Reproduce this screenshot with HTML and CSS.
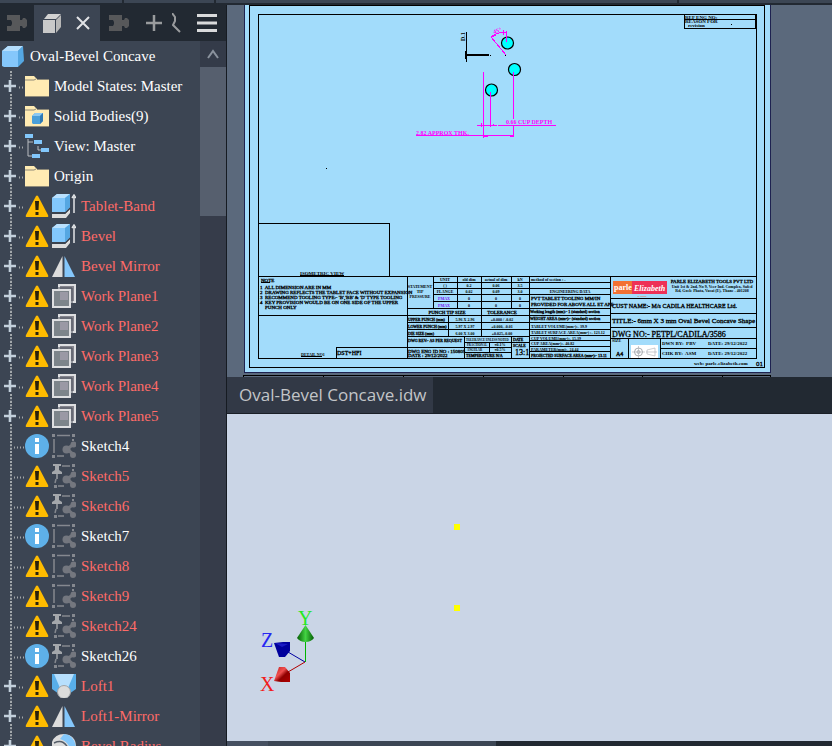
FILE: index.html
```html
<!DOCTYPE html>
<html lang="en">
<head>
<meta charset="utf-8">
<title>Oval-Bevel Concave</title>
<link rel="stylesheet" href="styles.css">
</head>
<body>
<svg class="defs" aria-hidden="true">
  <symbol id="branch" viewBox="0 0 25 30">
    <path d="M11 0V8M11 23V30" stroke="#a3a8ab" stroke-width="2" stroke-dasharray="2 1.33"/>
    <path d="M4 15H16M10 9V21" stroke="#c3d0dc" stroke-width="2.6"/>
    <path d="M19 16.5H24" stroke="#a3a8ab" stroke-width="2" stroke-dasharray="1 2"/>
  </symbol>
  <symbol id="leaf" viewBox="0 0 25 30">
    <path d="M11 0V30" stroke="#a3a8ab" stroke-width="2" stroke-dasharray="2 1.33"/>
    <path d="M14 16.5H24" stroke="#a3a8ab" stroke-width="2" stroke-dasharray="1 2"/>
  </symbol>
  <symbol id="cube" viewBox="0 0 24 24">
    <path d="M1 7 7 2H22L17 7V23H3L1 22Z" fill="#85c7fb"/>
    <path d="M1 7 7 2H22L17 7Z" fill="#b5defd"/>
    <path d="M17 7 22 2 23 17 17 23Z" fill="#55a7e2"/>
  </symbol>
  <symbol id="folder" viewBox="0 0 24 24">
    <path d="M0 2H9L12 5V6H24V22H0Z" fill="#ffebb3"/>
    <path d="M0 6H9L11 5" stroke="#8f8a78" fill="none"/>
    <path d="M12 5.5H24M0 22.5H24" stroke="#8f8a78"/>
  </symbol>
  <symbol id="bodies" viewBox="0 0 24 24">
    <use href="#folder"/>
    <path d="M7 12 10 9H18V17L15 20H8L7 19Z" fill="#4a9fd9"/>
    <path d="M7 12 10 9H18L15 12Z" fill="#8bc8f2"/>
    <path d="M15 12 18 9V17L15 20Z" fill="#2f79b5"/>
  </symbol>
  <symbol id="view" viewBox="0 0 24 24">
    <path d="M3 5V22H7M3 8H8M13 12V16H17" stroke="#b9bdc2" fill="none"/>
    <path d="M0 0H8V4H0ZM9 6H17V10H9ZM16 14H24V18H16ZM7 20H15V24H7Z" fill="#82c7fb"/>
  </symbol>
  <symbol id="warn" viewBox="0 0 24 24">
    <path d="M11 2Q12 1 13 2L23 21Q24 23 22 23H2Q0 23 1 21Z" fill="#ffbc00"/>
    <path d="M10 7H14L13.500 16H10.500ZM10.500 18H13.500V21H10.500Z" fill="#2a220c"/>
  </symbol>
  <symbol id="info" viewBox="0 0 24 24">
    <circle cx="12" cy="12" r="12" fill="#5eb0e8"/>
    <path d="M10 4H14V8H10ZM10 10H14V20H10Z" fill="#fff"/>
  </symbol>
  <symbol id="extrude" viewBox="0 0 24 24">
    <path d="M0 20H13L18 15V19L14 24H0Z" fill="#dcdcdc"/>
    <path d="M0 19H13L18 14" stroke="#3a414d" stroke-width="1.5" fill="none"/>
    <path d="M0 4 5 0H18V13L13 18H0Z" fill="#82c7fb"/>
    <path d="M0 4 5 0H18L13 4Z" fill="#b9e0fd"/>
    <path d="M13 4 18 0V13L13 18Z" fill="#55a7e2"/>
    <path d="M22 3V19M20 4L22 1L24 4" stroke="#e2e4e6" stroke-width="1.5" fill="none"/>
  </symbol>
  <symbol id="mirror" viewBox="0 0 24 24">
    <path d="M10.500 2V23H0Z" fill="#dcdcdc"/>
    <path d="M12.500 2V23H23Z" fill="#85c7fb"/>
  </symbol>
  <symbol id="plane" viewBox="0 0 24 24">
    <path d="M7 1H23V18H7Z" fill="#85858e" stroke="#dedfe1" stroke-width="2"/>
    <path d="M5 4H20V23" stroke="#4a515c" fill="none"/>
    <path d="M1 6H18V23H1Z" fill="#7c848a" stroke="#dedfe1" stroke-width="2"/>
    <path d="M8 8H16V16H8Z" fill="#9a99a5"/>
  </symbol>
  <symbol id="nodes" viewBox="0 0 24 24">
    <path d="M15 15 22 10M15 15 22 21" stroke="#74777f" stroke-width="3"/>
    <circle cx="14.500" cy="15.500" r="4" fill="#74777f"/>
    <circle cx="21.500" cy="10.500" r="3" fill="#74777f"/>
    <circle cx="21" cy="21" r="3" fill="#74777f"/>
  </symbol>
  <symbol id="sketch" viewBox="0 0 24 24">
    <path d="M5 1.500H18M2 5V19M5 22H12" stroke="#85888f" stroke-width="1.500"/>
    <path d="M0 0H3V3H0ZM20 0H23V3H20ZM0 21H3V24H0ZM20 5H22V7H20Z" fill="#85888f"/>
    <use href="#nodes"/>
  </symbol>
  <symbol id="pinned" viewBox="0 0 24 24">
    <path d="M10 2H18M4 15 3 19M6 22H12" stroke="#85888f" stroke-width="1.500"/>
    <path d="M20 0H23V3H20ZM2 21H5V24H2ZM20 5H22V7H20Z" fill="#85888f"/>
    <path d="M1 0H9V2H7V6L10 8V10H0V8L3 6V2H1ZM4.300 10H5.700V15H4.300Z" fill="#a4a7ab"/>
    <use href="#nodes"/>
  </symbol>
  <symbol id="loft" viewBox="0 0 24 24">
    <path d="M0 0H24V15L17 20H7L0 15Z" fill="#58aee9"/>
    <path d="M2 0H22L16 14H8Z" fill="#b7dffd"/>
    <circle cx="12" cy="18" r="6.500" fill="#dcdcdc" stroke="#a0a5aa"/>
  </symbol>
  <symbol id="fillet" viewBox="0 0 24 24">
    <path d="M0 8Q3 0 12 0Q24 1 24 13V24H0Z" fill="#dcdcdc"/>
    <path d="M12 0Q23 1 24 14L18 18Q18 8 8 5Z" fill="#82c7fb"/>
    <path d="M2 9Q13 4 17 17" stroke="#555d68" stroke-width="1.500" fill="none"/>
  </symbol>
  <symbol id="puzzle" viewBox="0 0 20 16">
    <path d="M0 0H13V5H15L16 3H18L20 5V11L18 13H16L15 11H13V16H0V11H4L5 9V7L4 5H0Z" fill="#57585a"/>
  </symbol>
</svg>

<div class="app">
  <div class="topstrip"><span></span><span></span><span></span><span></span></div>
  <aside class="browser">
    <header class="tabs">
      <button class="tab" aria-label="Add-in panel"><svg width="20" height="16"><use href="#puzzle"/></svg></button>
      <div class="tab active">
        <svg width="18" height="19" viewBox="0 0 18 19"><path d="M0 6H12V19H0Z" fill="#c9c9c9"/><path d="M1 5 5 0H18L13 5Z" fill="#d2d2d2"/><path d="M13 6 18 1V13L13 19Z" fill="#b7b7b7"/></svg>
        <button aria-label="Close"><svg width="14" height="14" viewBox="0 0 14 14"><path d="M1 1 13 13M13 1 1 13" stroke="#e1e3e6" stroke-width="2"/></svg></button>
      </div>
      <button class="tab third" aria-label="Second add-in panel"><svg width="20" height="16"><use href="#puzzle"/></svg></button>
      <button aria-label="Add panel"><svg width="16" height="16" viewBox="0 0 16 16"><path d="M0 8H16M8 0V16" stroke="#999b9d" stroke-width="2.500"/></svg></button>
      <button class="search" aria-label="Search"><svg width="10" height="20" viewBox="0 0 10 20"><path d="M0 0 3 4V8L1 12 3 14 8 19" stroke="#999b9d" stroke-width="2" fill="none"/></svg></button>
      <button class="menu" aria-label="Menu"><svg width="20" height="18" viewBox="0 0 20 18"><path d="M0 1.500H20M0 9H20M0 16.500H20" stroke="#d9dadb" stroke-width="3"/></svg></button>
    </header>
    <div class="treewrap">
      <ul class="tree">
        <li class="root"><svg class="ico"><use href="#cube"/></svg><span>Oval-Bevel Concave</span></li>
        <li><svg class="gut"><use href="#branch"/></svg><svg class="ico"><use href="#folder"/></svg><span>Model States: Master</span></li>
        <li><svg class="gut"><use href="#branch"/></svg><svg class="ico"><use href="#bodies"/></svg><span>Solid Bodies(9)</span></li>
        <li><svg class="gut"><use href="#branch"/></svg><svg class="ico"><use href="#view"/></svg><span>View: Master</span></li>
        <li><svg class="gut"><use href="#branch"/></svg><svg class="ico"><use href="#folder"/></svg><span>Origin</span></li>
        <li class="bad"><svg class="gut"><use href="#branch"/></svg><svg class="ico"><use href="#warn"/></svg><svg class="ico"><use href="#extrude"/></svg><span>Tablet-Band</span></li>
        <li class="bad"><svg class="gut"><use href="#branch"/></svg><svg class="ico"><use href="#warn"/></svg><svg class="ico"><use href="#extrude"/></svg><span>Bevel</span></li>
        <li class="bad"><svg class="gut"><use href="#branch"/></svg><svg class="ico"><use href="#warn"/></svg><svg class="ico"><use href="#mirror"/></svg><span>Bevel Mirror</span></li>
        <li class="bad"><svg class="gut"><use href="#branch"/></svg><svg class="ico"><use href="#warn"/></svg><svg class="ico"><use href="#plane"/></svg><span>Work Plane1</span></li>
        <li class="bad"><svg class="gut"><use href="#branch"/></svg><svg class="ico"><use href="#warn"/></svg><svg class="ico"><use href="#plane"/></svg><span>Work Plane2</span></li>
        <li class="bad"><svg class="gut"><use href="#branch"/></svg><svg class="ico"><use href="#warn"/></svg><svg class="ico"><use href="#plane"/></svg><span>Work Plane3</span></li>
        <li class="bad"><svg class="gut"><use href="#branch"/></svg><svg class="ico"><use href="#warn"/></svg><svg class="ico"><use href="#plane"/></svg><span>Work Plane4</span></li>
        <li class="bad"><svg class="gut"><use href="#branch"/></svg><svg class="ico"><use href="#warn"/></svg><svg class="ico"><use href="#plane"/></svg><span>Work Plane5</span></li>
        <li><svg class="gut"><use href="#leaf"/></svg><svg class="ico"><use href="#info"/></svg><svg class="ico"><use href="#sketch"/></svg><span>Sketch4</span></li>
        <li class="bad"><svg class="gut"><use href="#leaf"/></svg><svg class="ico"><use href="#warn"/></svg><svg class="ico"><use href="#pinned"/></svg><span>Sketch5</span></li>
        <li class="bad"><svg class="gut"><use href="#leaf"/></svg><svg class="ico"><use href="#warn"/></svg><svg class="ico"><use href="#pinned"/></svg><span>Sketch6</span></li>
        <li><svg class="gut"><use href="#leaf"/></svg><svg class="ico"><use href="#info"/></svg><svg class="ico"><use href="#sketch"/></svg><span>Sketch7</span></li>
        <li class="bad"><svg class="gut"><use href="#leaf"/></svg><svg class="ico"><use href="#warn"/></svg><svg class="ico"><use href="#sketch"/></svg><span>Sketch8</span></li>
        <li class="bad"><svg class="gut"><use href="#leaf"/></svg><svg class="ico"><use href="#warn"/></svg><svg class="ico"><use href="#sketch"/></svg><span>Sketch9</span></li>
        <li class="bad"><svg class="gut"><use href="#leaf"/></svg><svg class="ico"><use href="#warn"/></svg><svg class="ico"><use href="#pinned"/></svg><span>Sketch24</span></li>
        <li><svg class="gut"><use href="#leaf"/></svg><svg class="ico"><use href="#info"/></svg><svg class="ico"><use href="#pinned"/></svg><span>Sketch26</span></li>
        <li class="bad"><svg class="gut"><use href="#branch"/></svg><svg class="ico"><use href="#warn"/></svg><svg class="ico"><use href="#loft"/></svg><span>Loft1</span></li>
        <li class="bad"><svg class="gut"><use href="#branch"/></svg><svg class="ico"><use href="#warn"/></svg><svg class="ico"><use href="#mirror"/></svg><span>Loft1-Mirror</span></li>
        <li class="bad"><svg class="gut"><use href="#branch"/></svg><svg class="ico"><use href="#warn"/></svg><svg class="ico"><use href="#fillet"/></svg><span>Bevel Radius</span></li>
      </ul>
      <div class="scroll">
        <button aria-label="Scroll up"><svg width="12" height="10" viewBox="0 0 12 10"><path d="M1 9 6 2 11 9" stroke="#8a929d" stroke-width="2" fill="none"/></svg></button>
        <div class="thumb"></div>
      </div>
    </div>
  </aside>

  <main class="work">
    <section class="drawing">
      <svg class="sheet" viewBox="227 5 605 372" role="img" aria-label="Tablet drawing sheet">
        <g shape-rendering="crispEdges">
          <path d="M244 5H771V373H244Z" fill="#1e2250"/>
          <path d="M245 5H770V372H245Z" fill="#a2dcfb"/>
          <g fill="none" stroke="#000">
            <path d="M249.500 5.500H764.500V367.500H249.500Z"/>
            <path d="M258.500 14.500H756.500V358.500H258.500Z"/>
            <path d="M243.500 377V375.500H770.500V377M323.500 375V377M403.500 375V377M483.500 375V377M563.500 375V377M642.500 375V377M722.500 375V377"/>
            <path d="M684.500 14V28.500H755.500V14M684 19.500H756"/>
            <path d="M258 223.500H389.500V276M258 276.500H756M407.500 276V358M258 315.500H407M336.500 358V347.500H407"/>
            <path d="M433.500 276V308M457.500 276V308M481.500 276V336M511.500 276V308M529.500 276V358M448.500 315V336M464.500 336V358M489.500 342V352M511.500 336V358"/>
            <path d="M433 282.500H529M433 288.500H529M433 294.500H529M433 301.500H529M407 308.500H529M407 315.500H529M407 322.500H529M407 329.500H529M407 336.500H529M407 347.500H464M464 342.500H529M464 347.500H511M464 352.500H511"/>
            <path d="M610.500 276V358M529 282.500H610M529 288.500H610M529 294.500H610M529 308.500H610M529 315.500H610M529 322.500H610M529 329.500H610M529 335.500H610M529 340.500H610M529 346.500H610M529 351.500H610"/>
            <path d="M610 298.500H756M610 313.500H756M610 327.500H756M610 338.500H756M660 348.500H756M628.500 338V358M660.500 338V358"/>
            <path d="M466.500 32V62M465.500 51V59"/>
            <path d="M466 55H489" stroke-width="2"/>
          </g>
          <path d="M326 168h1v1h-1ZM731 24h1v1h-1ZM490 55h1v1h-1ZM505 55h1v1h-1Z"/>
          <path d="M300 275.500H344M261 282.500H270M301 356.500H322" stroke="#000"/>
        </g>
        <g fill="#00ffff" stroke="#000" stroke-width="1.200">
          <circle cx="507.500" cy="43" r="6"/><circle cx="514.500" cy="69.500" r="6"/><circle cx="491.500" cy="90" r="6"/>
        </g>
        <g stroke="#f0f" fill="none" shape-rendering="crispEdges">
          <path d="M506.500 31V42M513.500 72V119M513.500 126V137M483.500 72V138M490.500 92V127M477 125.500H497M498 125.500H556M416 135.500H514M484 136.500H488M510 136.500H514M481 123V127M493 124V126M503 30V35"/>
          <path d="M506 55 491 37Q497 32 506 32M491 37l5-2"/>
        </g>
        <g class="dim" fill="#f0f">
          <text x="506" y="124">0.66 CUP DEPTH</text>
          <text x="416" y="135">2.82 APPROX THK.</text>
          <text transform="translate(494 34) rotate(-20)">45°</text>
        </g>
        <text class="dim" transform="translate(465 41) rotate(-90)">D.1</text>

        <g class="t5">
          <text x="685" y="19">REF ENG NO:</text><text x="685" y="23">REASON FOR</text><text x="688" y="27">revision</text>
          <text x="300" y="275">ISOMETRIC VIEW</text>
          <text x="694" y="365">web: parle-elizabeth.com</text>
          <text x="662" y="345">DWN BY:&#160; PBV</text><text x="708" y="345">DATE: 29/12/2022</text>
          <text x="662" y="355">CHK BY:&#160; ASM</text><text x="708" y="355">DATE: 29/12/2022</text>
        </g>
        <g class="t5 slim">
          <text x="261" y="282">NOTE</text>
          <text x="260" y="289">1&#160; ALL DIMENSION ARE IN MM</text>
          <text x="260" y="294">2&#160; DRAWING REFLECTS THE TABLET FACE WITHOUT EXPANSION</text>
          <text x="260" y="299">3&#160; RECOMMEND TOOLING TYPE:- 'B','BB' &amp; 'D' TYPE TOOLING</text>
          <text x="260" y="304">4&#160; KEY PROVISION WOULD BE ON ONE SIDE OF THE UPPER</text>
          <text x="265" y="309">PUNCH ONLY</text>
          <text x="408" y="353">DWG ENG ID NO : 150805</text><text x="408" y="357">DATE : 29/12/2022</text>
          <text x="531" y="300">PVT TABLET TOOLING MM/IN</text><text x="531" y="306">PROVIDED FOR ABOVE ALL ET APE</text>
        </g>
        <g class="t5 slim mid">
          <text x="447" y="314">PUNCH TIP SIZE</text><text x="502" y="314">TOLERANCE</text>
          <text x="712" y="283">PARLE ELIZABETH TOOLS PVT LTD</text>
        </g>
        <g class="t4 mid">
          <text x="420" y="288">STATEMENT</text><text x="420" y="293">TIP</text><text x="420" y="298">PRESSURE</text>
          <text x="445" y="281">UNIT</text><text x="469" y="281">old dim</text><text x="496" y="281">actual of dim</text><text x="520" y="281">kN</text>
          <text x="445" y="287">( )</text><text x="469" y="287">0.2</text><text x="496" y="287">0.06</text><text x="520" y="287">3.5</text>
          <text x="445" y="293">FLANGE</text><text x="469" y="293">0.02</text><text x="496" y="293">0.09</text><text x="520" y="293">3.0</text>
          <text x="469" y="300">0</text><text x="496" y="300">0</text><text x="520" y="300">0</text>
          <text x="469" y="307">0</text><text x="496" y="307">0</text><text x="520" y="307">0</text>
          <text x="465" y="321">5.96 X 2.96</text><text x="502" y="321">+0.000 / -0.02</text>
          <text x="465" y="328">5.97 X 2.97</text><text x="502" y="328">+0.000, -0.01</text>
          <text x="465" y="335">6.00 X 3.00</text><text x="502" y="335">+0.025,-0.00</text>
          <text x="500" y="346">±0.1%</text><text x="500" y="351">±0.5%</text>
          <text x="570" y="293">ENGINEERING DATA</text>
          <text x="712" y="288">Unit 1st &amp; 2nd, No 9, Veer Ind. Complex, Safed</text>
          <text x="712" y="292">Rd, Goele Phata, Vasai (E), Thane - 401208</text>
          <text x="642" y="297" fill="#e65a20">.. ......</text>
        </g>
        <g class="t4 slim">
          <text x="408" y="321">UPPER PUNCH (mm)</text><text x="408" y="328">LOWER PUNCH (mm)</text><text x="408" y="335">DIE SIZE (mm)</text>
          <text x="408" y="342">DWG REV:- AS PER REQUEST</text>
          <text x="466" y="357">TEMPERATURE N/A</text><text x="513" y="341">DATE</text><text x="513" y="347">SCALE</text>
          <text x="530" y="313">Working length (mm):- 1 (standard) section</text>
          <text x="530" y="320">WEIGHT AREA (mm²):- (standard) section</text>
          <text x="531" y="357">PROJECTED SURFACE AREA (mm²):- 13.11</text>
        </g>
        <g class="t3">
          <text x="466" y="341">TOLERANCE UNLESS NOTED</text>
          <text x="467" y="346">FRACTIONAL</text><text x="467" y="351">ANGULAR</text>
        </g>
        <g class="t4">
          <text x="531" y="281">method of section : -</text>
          <text x="531" y="328">TABLET VOLUME(mm³):- 39.9</text>
          <text x="531" y="334">TABLET SURFACE AREA(mm²) :- 123.12</text>
          <text x="531" y="340">CUP VOLUME(mm³):- 15.39</text>
          <text x="531" y="345">CUP AREA(mm²):- 40.82</text>
          <text x="531" y="351">PARAMETER(mm):- 24.44</text>
          <text x="301" y="356">DETAIL NO1</text><text x="612" y="342">SIZE</text>
        </g>
        <g class="t4" fill="#7a10f0"><text x="438" y="300">PMAX</text><text x="438" y="307">PMAX</text></g>
        <g class="t6 slim"><text x="337" y="355">DST+HFI</text><text x="612" y="308">CUST NAME:- M/s CADILA HEALTHCARE Ltd.</text><text x="616" y="356">A4</text></g>
        <g class="t7 slim"><text x="612" y="323">TITLE:- 6mm X 3 mm Oval Bevel Concave Shape</text><text x="756" y="366">01</text></g>
        <g class="t8 slim"><text x="612" y="337">DWG NO:- PETPL/CADILA/3586</text><text x="515" y="355">13:1</text></g>

        <path d="M613 281H633V294H613Z" fill="#f27133"/><path d="M632 281H667V294H632Z" fill="#ee3157"/>
        <text class="brand" x="614" y="290">parle</text><text class="brand big" x="634" y="291">Elizabeth</text>
        <path d="M631 345H658V358H631Z" fill="#fff"/>
        <g fill="none" stroke="#a9adb1"><circle cx="638.500" cy="352" r="4"/><circle cx="638.500" cy="352" r="1.500"/><path d="M632 352H645M638.500 346V358M647 350 655 348V356L647 354ZM646 352H657" stroke-width=".6"/></g>
      </svg>
    </section>
    <nav class="filetabs"><button>Oval-Bevel Concave.idw</button></nav>
    <section class="viewport">
      <svg viewBox="227 414 605 327" role="img" aria-label="Model viewport">
        <defs>
          <linearGradient id="gy"><stop offset="0" stop-color="#045c04"/><stop offset=".5" stop-color="#43d343"/><stop offset="1" stop-color="#045c04"/></linearGradient>
          <linearGradient id="gx" y2="1"><stop offset="0" stop-color="#c02020"/><stop offset=".4" stop-color="#f05050"/><stop offset=".6" stop-color="#900000"/><stop offset="1" stop-color="#b00000"/></linearGradient>
        </defs>
        <path d="M454 524h6v6h-6ZM454 605h6v6h-6Z" fill="#ff0"/>
        <path d="M305.500 640V662" stroke="#00b400"/>
        <path d="M305 662 288 652" stroke="#0000a0"/>
        <path d="M305 662 288 672" stroke="#b00000"/>
        <path d="M305.500 625 314 638Q311 642 305.500 642T297 638Z" fill="url(#gy)"/>
        <path d="M274 643 283 642 290 642V651L285 657H279Z" fill="#00009c"/><path d="M275 643 288 644 282 647Z" fill="#1a1ac4"/>
        <path d="M274 681 279 667H285L290 673V682L281 682Z" fill="url(#gx)"/>
        <text x="298" y="625" fill="#25e825">Y</text><text x="261" y="647" fill="#2727f2">Z</text><text x="260" y="691" fill="#f21c1c">X</text>
      </svg>
    </section>
    <div class="status"><span></span><span></span><span></span></div>
  </main>
</div>
</body>
</html>
```
FILE: styles.css
```css
* { box-sizing: border-box; }
body { margin: 0; background: #3c4553; }
button { padding: 0; border: 0; background: none; color: inherit; font: inherit; line-height: 0; }
svg { display: block; flex: none; }
.defs { position: absolute; width: 0; height: 0; }

.app {
  display: grid;
  grid-template: 5px minmax(0, 1fr) / 227px minmax(0, 1fr);
  height: 100vh;
  overflow: hidden;
}
.topstrip {
  grid-column: 1 / -1;
  display: grid;
  grid-template-columns: 122px 90px 461px 1fr;
  gap: 2px;
  background: #222932;
  border-bottom: 2px solid #222932;
}
.topstrip span { background: #3c4654; }

.browser {
  display: flex;
  flex-direction: column;
  min-height: 0;
  border-right: 1px solid #161b22;
}
.tabs {
  display: flex;
  align-items: center;
  flex: none;
  height: 36px;
  padding-right: 9px;
  background: #222932;
}
.tab { display: flex; align-items: center; justify-content: center; width: 34px; height: 36px; }
.tab.active { justify-content: space-between; width: 66px; padding: 0 10px 0 9px; background: #3c4553; }
.tab.third { width: 38px; margin-right: 8px; }
.tabs .search { margin-left: 10px; }
.tabs .menu { margin-left: auto; }

.treewrap { display: flex; flex: 1; min-height: 0; }
.tree {
  flex: 1;
  min-width: 0;
  margin: 0;
  padding: 0;
  overflow: hidden;
  list-style: none;
  font: 15px/30px "Liberation Serif", "Times New Roman", serif;
  color: #fff;
}
.tree li { display: flex; align-items: center; height: 30px; white-space: nowrap; }
.tree .bad { color: #ff6b68; }
.gut { width: 25px; height: 30px; }
.ico { width: 24px; height: 24px; }
.ico + .ico { margin-left: 3px; }
.tree span { margin-left: 5px; }
.tree .root { padding-left: 1px; }
.scroll { width: 26px; background: #363c4a; }
.scroll button { display: grid; place-items: center; width: 100%; height: 26px; background: #343b49; }
.thumb { height: 149px; background: #565f6e; }

.work {
  display: grid;
  grid-template-rows: minmax(0, 372fr) 37px minmax(0, 327fr) 5px;
  min-height: 0;
}
.drawing { background: #5b697c; }
.sheet, .viewport svg { width: 100%; height: 100%; }
.sheet text { font-family: "Liberation Serif", "Times New Roman", serif; font-weight: bold; }
.sheet .t3 text { font-size: 3px; }
.sheet .t4 text { font-size: 4px; }
.sheet .t5 text { font-size: 5px; }
.sheet .t6 text { font-size: 6px; }
.sheet .t7 text { font-size: 7px; }
.sheet .t8 text { font-size: 8px; }
.sheet .slim text { font-weight: normal; stroke: #000; stroke-width: .3; }
.sheet .mid text { text-anchor: middle; }
.sheet .dim, .sheet .dim text { font-size: 6px; }
.sheet .brand { fill: #fff; font-size: 8px; }
.sheet .brand.big { font-style: italic; }

.filetabs { background: #222932; border-bottom: 1px solid #1a1f27; }
.filetabs button {
  height: 36px;
  padding: 0 6px 0 12px;
  background: #323946;
  color: #c3c5c8;
  font: 17px/36px "Open Sans", "Noto Sans", sans-serif;
}
.viewport { background: #cad5e6; }
.viewport text { font: 20px "Liberation Serif", "Times New Roman", serif; }
.status { display: grid; grid-template-columns: 41px 228px 1fr; background: #222932; }
.status span:nth-child(1) { background: #465061; }
.status span:nth-child(2) { background: #3c4654; }
```
